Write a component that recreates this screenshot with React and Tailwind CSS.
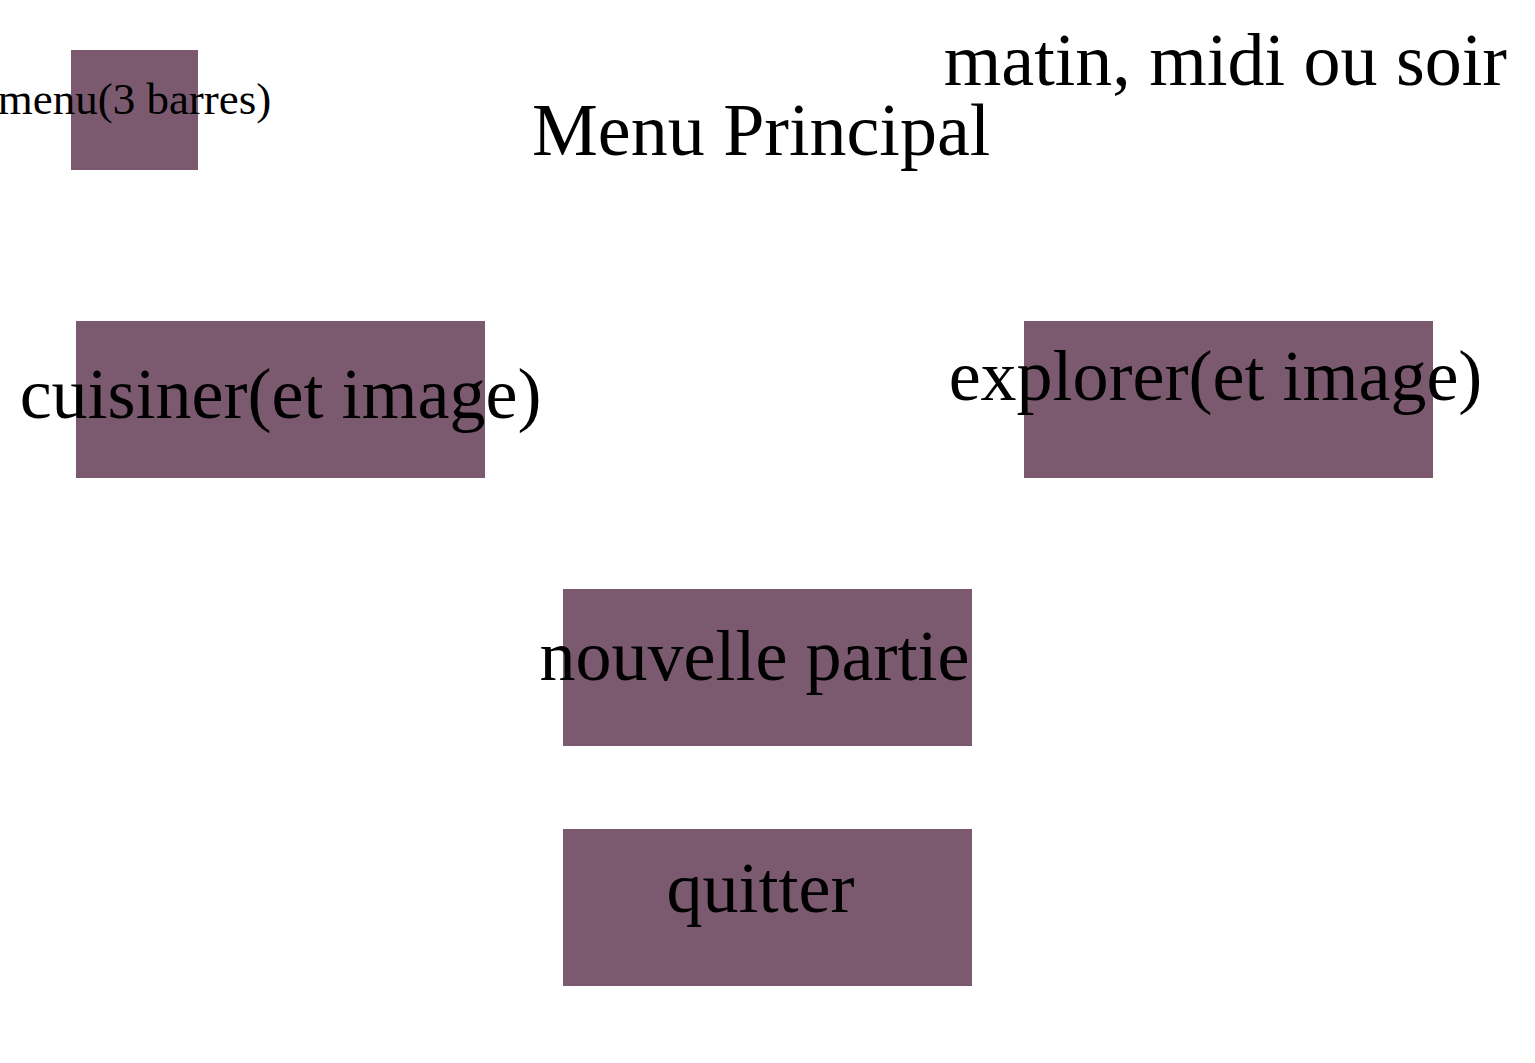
export default function App() {
  const box = "bg-[#7b5a6f] flex justify-center"

  return (
    <div className="min-h-[1063px] w-full bg-white text-black font-['Liberation_Serif',serif] overflow-hidden">
      {/* Header */}
      <header className="flex items-start h-[321px]">
        <div className={`${box} ml-[71px] mt-[50px] w-[127px] h-[120px] shrink-0`}>
          <span className="pt-[27px] text-[45px] leading-none whitespace-nowrap">menu(3 barres)</span>
        </div>
        <div className="flex-1 flex flex-col">
          <p className="self-end mr-[28px] mt-[23px] text-[74px] leading-none whitespace-nowrap">matin, midi ou soir</p>
          <h1 className="ml-[334px] -mt-[4px] text-[74px] leading-none whitespace-nowrap">Menu Principal</h1>
        </div>
      </header>

      {/* Activités */}
      <div className="flex justify-between pl-[76px] pr-[102px]">
        <div className={`${box} w-[409px] h-[157px]`}>
          <span className="pt-[37px] text-[72px] leading-none whitespace-nowrap">cuisiner(et image)</span>
        </div>
        <div className={`${box} w-[409px] h-[157px]`}>
          <span className="pt-[19px] mr-[26px] text-[72px] leading-none whitespace-nowrap">explorer(et image)</span>
        </div>
      </div>

      {/* Partie */}
      <div className="flex flex-col items-center mt-[111px] gap-[83px]">
        <div className={`${box} w-[409px] h-[157px]`}>
          <span className="pt-[31px] mr-[26px] text-[72px] leading-none whitespace-nowrap">nouvelle partie</span>
        </div>
        <div className={`${box} w-[409px] h-[157px]`}>
          <span className="pt-[23px] mr-[14px] text-[72px] leading-none whitespace-nowrap">quitter</span>
        </div>
      </div>
    </div>
  )
}
